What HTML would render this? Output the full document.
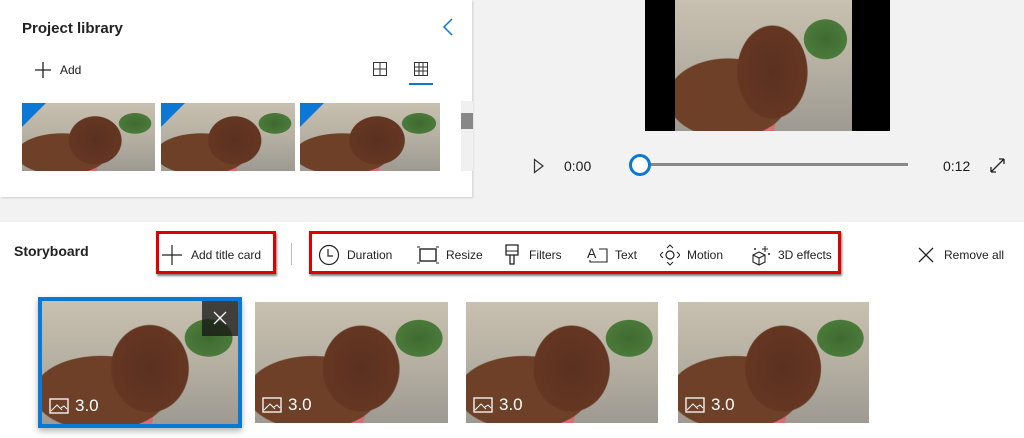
<!DOCTYPE html>
<html><head><style>
*{margin:0;padding:0;box-sizing:border-box}
body{width:1024px;height:438px;background:#f2f2f2;font-family:"Liberation Sans",sans-serif;position:relative;overflow:hidden;color:#1a1a1a}
.a{position:absolute}
.lib{left:0;top:0;width:472px;height:197px;background:#fff;box-shadow:1px 1px 2px rgba(0,0,0,.15)}
.sb{left:0;top:222px;width:1024px;height:216px;background:#fff}
.dog{position:absolute;overflow:hidden;background:
radial-gradient(ellipse 28% 50% at 55% 55%,#5a3020 0,#653722 70%,transparent 72%),
radial-gradient(ellipse 45% 40% at 30% 75%,#6e4028 0,#6e4028 75%,transparent 77%),
radial-gradient(ellipse 12% 40% at 50% 85%,#e07a80 0,#d86a70 60%,transparent 62%),
radial-gradient(ellipse 20% 25% at 85% 30%,#3f6a30 0,#4a7a3a 60%,transparent 62%),
linear-gradient(#c8c0b0 0,#b8b2a4 45%,#9e9a92 100%)}
.tri{position:absolute;left:0;top:0;width:0;height:0;border-top:24px solid #0a78d4;border-right:24px solid transparent}
.lbl{position:absolute;left:7px;bottom:8px;color:#fff;font-size:17px;display:flex;align-items:center;gap:6px}
.btn{position:absolute;top:242px;height:26px;display:flex;align-items:center;font-size:12px;color:#222}
.red{position:absolute;border:3px solid #e00000;box-shadow:1px 2px 2px rgba(0,0,0,.5)}
</style></head><body>
<div class="a lib">
 <div class="a" style="left:22px;top:20px;font-size:15px;font-weight:bold;color:#222">Project library</div>
 <svg class="a" style="left:442px;top:17px" width="12" height="20"><path d="M10 2 L2 10 L10 18" stroke="#0a78d4" stroke-width="1.5" fill="none"/></svg>
 <svg class="a" style="left:35px;top:62px" width="16" height="16"><path d="M8 0V16M0 8H16" stroke="#222" stroke-width="1.3"/></svg>
 <div class="a" style="left:60px;top:63px;font-size:12px">Add</div>
 <svg class="a" style="left:373px;top:62px" width="14" height="14"><rect x=".5" y=".5" width="13" height="13" fill="none" stroke="#333"/><path d="M7 0V14M0 7H14" stroke="#333"/></svg>
 <svg class="a" style="left:414px;top:62px" width="14" height="14"><rect x=".5" y=".5" width="13" height="13" fill="none" stroke="#333"/><path d="M5 0V14M9 0V14M0 5H14M0 9H14" stroke="#333"/></svg>
 <div class="a" style="left:409px;top:83px;width:24px;height:2px;background:#0a78d4"></div>
 <div class="dog" style="left:22px;top:103px;width:133px;height:68px"><div class="tri"></div></div>
 <div class="dog" style="left:161px;top:103px;width:134px;height:68px"><div class="tri"></div></div>
 <div class="dog" style="left:300px;top:103px;width:140px;height:68px"><div class="tri"></div></div>
 <div class="a" style="left:461px;top:101px;width:12px;height:70px;background:#f0f0f0"></div>
 <div class="a" style="left:461px;top:113px;width:12px;height:16px;background:#888"></div>
</div>
<div class="a" style="left:645px;top:0;width:245px;height:131px;background:#000"><div class="dog" style="left:30px;top:0;width:177px;height:131px"></div></div>
<svg class="a" style="left:533px;top:158px" width="12" height="16"><path d="M1.5 1.5L10 8L1.5 14.5Z" fill="none" stroke="#333" stroke-width="1.2"/></svg>
<div class="a" style="left:564px;top:158px;font-size:14px">0:00</div>
<div class="a" style="left:640px;top:163px;width:268px;height:3px;background:#888"></div>
<div class="a" style="left:629px;top:154px;width:22px;height:22px;border-radius:50%;background:#fff;border:3px solid #0a78d4"></div>
<div class="a" style="left:943px;top:158px;font-size:14px">0:12</div>
<svg class="a" style="left:990px;top:158px" width="15" height="15"><path d="M1 14L14 1M1 14V9M1 14H6M14 1H9M14 1V6" stroke="#222" stroke-width="1.3" fill="none"/></svg>
<div class="a sb"></div>
<div class="a" style="left:14px;top:243px;font-size:14px;font-weight:bold;color:#222">Storyboard</div>
<div class="red" style="left:156px;top:231px;width:120px;height:43px"></div>
<div class="btn" style="left:162px"><svg width="20" height="20"><path d="M10 0V20M0 10H20" stroke="#222" stroke-width="1.2"/></svg><span style="margin-left:9px">Add title card</span></div>
<div class="a" style="left:291px;top:243px;width:1px;height:22px;background:#bbb"></div>
<div class="red" style="left:309px;top:231px;width:532px;height:43px"></div>
<div class="btn" style="left:318px"><svg width="22" height="22"><circle cx="11" cy="11" r="9.5" fill="none" stroke="#222" stroke-width="1.2"/><path d="M10 5V12H15" stroke="#222" stroke-width="1.2" fill="none"/></svg><span style="margin-left:7px">Duration</span></div>
<div class="btn" style="left:417px"><svg width="22" height="18"><rect x="3" y="3" width="16" height="12" fill="none" stroke="#222" stroke-width="1.4"/><path d="M0 1H3M19 1H22M0 17H3M19 17H22" stroke="#222"/></svg><span style="margin-left:7px">Resize</span></div>
<div class="btn" style="left:505px"><svg width="14" height="22"><path d="M1 1H13V11H1Z M5 11V20H9V11" fill="none" stroke="#222" stroke-width="1.3"/><path d="M1 7H13" stroke="#222"/></svg><span style="margin-left:10px">Filters</span></div>
<div class="btn" style="left:587px"><svg width="22" height="20"><text x="0" y="13" font-size="14" font-family="Liberation Sans" fill="#222">A</text><path d="M12 4H20V17H3V15" stroke="#222" stroke-width="1.1" fill="none"/></svg><span style="margin-left:6px">Text</span></div>
<div class="btn" style="left:660px"><svg width="20" height="22"><circle cx="10" cy="11" r="4" fill="none" stroke="#222" stroke-width="1.2"/><path d="M7 4L10 1L13 4M7 18L10 21L13 18M3 8L0 11L3 14M17 8L20 11L17 14" stroke="#222" fill="none"/></svg><span style="margin-left:7px">Motion</span></div>
<div class="btn" style="left:751px"><svg width="20" height="22"><path d="M2 11L8 8L14 11V18L8 21L2 18Z M2 11L8 14L14 11 M8 14V21" stroke="#222" stroke-width="1.1" fill="none"/><path d="M14 2V8M11 5H17M4 4V6M3 5H5M18 9V11M17 10H19" stroke="#222"/></svg><span style="margin-left:7px">3D effects</span></div>
<div class="btn" style="left:918px"><svg width="16" height="16"><path d="M1 1L15 15M15 1L1 15" stroke="#222" stroke-width="1.3"/></svg><span style="margin-left:10px">Remove all</span></div>
<div class="a" style="left:38px;top:297px;width:204px;height:131px;background:#0a78d4;box-shadow:0 3px 6px rgba(0,0,0,.3)"></div>
<div class="dog" style="left:42px;top:301px;width:196px;height:123px">
 <div class="a" style="right:0;top:0;width:36px;height:35px;background:rgba(20,20,20,.75)"><svg style="position:absolute;left:11px;top:10px" width="14" height="14"><path d="M1 1L13 13M13 1L1 13" stroke="#fff" stroke-width="1.3"/></svg></div>
 <div class="lbl"><svg width="20" height="16"><rect x="1" y="1" width="18" height="14" fill="none" stroke="#fff" stroke-width="1.3"/><path d="M2 13L8 7L13 12M12 10L15 8L18 11" stroke="#fff" fill="none"/></svg>3.0</div>
</div>
<div class="dog" style="left:255px;top:302px;width:193px;height:121px"><div class="lbl"><svg width="20" height="16"><rect x="1" y="1" width="18" height="14" fill="none" stroke="#fff" stroke-width="1.3"/><path d="M2 13L8 7L13 12M12 10L15 8L18 11" stroke="#fff" fill="none"/></svg>3.0</div></div>
<div class="dog" style="left:466px;top:302px;width:192px;height:121px"><div class="lbl"><svg width="20" height="16"><rect x="1" y="1" width="18" height="14" fill="none" stroke="#fff" stroke-width="1.3"/><path d="M2 13L8 7L13 12M12 10L15 8L18 11" stroke="#fff" fill="none"/></svg>3.0</div></div>
<div class="dog" style="left:678px;top:302px;width:191px;height:121px"><div class="lbl"><svg width="20" height="16"><rect x="1" y="1" width="18" height="14" fill="none" stroke="#fff" stroke-width="1.3"/><path d="M2 13L8 7L13 12M12 10L15 8L18 11" stroke="#fff" fill="none"/></svg>3.0</div></div>
</body></html>
